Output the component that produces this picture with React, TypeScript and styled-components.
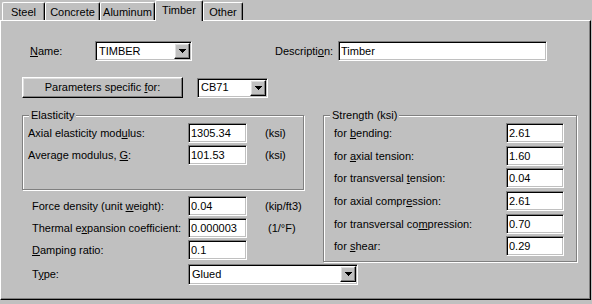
import React from 'react';
import styled, { createGlobalStyle, css } from 'styled-components';

const Global = createGlobalStyle`
  html, body { margin: 0; padding: 0; background: #c0c0c0; }
  body { font-family: "Liberation Sans", Arial, sans-serif; font-size: 11px; color: #000; }
  * { box-sizing: border-box; }
`;

const Window = styled.div`
  width: 592px;
  height: 304px;
  background: #c0c0c0;
  overflow: hidden;
`;

const TabStrip = styled.div`
  display: flex;
  align-items: flex-end;
  height: 20px;
  padding-left: 2px;
  position: relative;
  z-index: 1;
`;

const Tab = styled.div<{ $w: number; $active?: boolean }>`
  width: ${(p) => p.$w}px;
  height: ${(p) => (p.$active ? 21 : 18)}px;
  margin-bottom: ${(p) => (p.$active ? -1 : 0)}px;
  background: #c0c0c0;
  border-left: 1px solid #fff;
  border-top: 1px solid #fff;
  border-right: 1px solid #000;
  border-top-left-radius: 2px;
  border-top-right-radius: 2px;
  box-shadow: inset -1px 0 0 #808080;
  display: flex;
  justify-content: center;
  padding-top: ${(p) => (p.$active ? 3 : 3)}px;
  line-height: 13px;
`;

const Panel = styled.div`
  width: 591px;
  height: 280px;
  border-left: 1px solid #fff;
  border-top: 1px solid #fff;
  border-right: 1px solid #000;
  border-bottom: 1px solid #000;
  box-shadow: inset -1px -1px 0 #808080;
  padding: 20px 0 0 21px;
`;

const Row = styled.div<{ $mt?: number; $h?: number; $pl?: number }>`
  display: flex;
  align-items: center;
  height: ${(p) => p.$h ?? 20}px;
  margin-top: ${(p) => p.$mt ?? 0}px;
  padding-left: ${(p) => p.$pl ?? 0}px;
`;

const Label = styled.span<{ $w?: number; $pl?: number; $ml?: number }>`
  display: block;
  flex: none;
  width: ${(p) => (p.$w ? `${p.$w}px` : 'auto')};
  padding-left: ${(p) => p.$pl ?? 0}px;
  margin-left: ${(p) => p.$ml ?? 0}px;
  white-space: nowrap;
  line-height: 13px;
`;

const Key = styled.span`
  text-decoration: underline;
  text-underline-offset: 1px;
`;

const sunken = css`
  background: #fff;
  border: 1px solid;
  border-color: #808080 #fff #fff #808080;
  box-shadow: inset 1px 1px 0 #000, inset -1px -1px 0 #c0c0c0;
`;

const raised = css`
  background: #c0c0c0;
  border: 1px solid;
  border-color: #fff #000 #000 #fff;
  box-shadow: inset -1px -1px 0 #808080, inset 1px 1px 0 #dfdfdf;
`;

const Field = styled.input<{ $w: number; $h?: number }>`
  ${sunken};
  flex: none;
  width: ${(p) => p.$w}px;
  height: ${(p) => p.$h ?? 20}px;
  padding: 0 0 0 2px;
  margin: 0;
  font: inherit;
  color: #000;
  outline: none;
`;

const Combo = styled.div<{ $w: number; $h?: number; $ml?: number }>`
  ${sunken};
  flex: none;
  display: flex;
  align-items: center;
  width: ${(p) => p.$w}px;
  height: ${(p) => p.$h ?? 20}px;
  margin-left: ${(p) => p.$ml ?? 0}px;
  padding: 1px;
`;

const ComboText = styled.span`
  flex: 1;
  padding-left: 2px;
  line-height: 13px;
`;

const DropButton = styled.div`
  ${raised};
  flex: none;
  width: 16px;
  height: 16px;
  display: flex;
  align-items: center;
  justify-content: center;
  align-self: flex-start;
`;

const PushButton = styled.div<{ $w: number }>`
  ${raised};
  flex: none;
  width: ${(p) => p.$w}px;
  height: 21px;
  display: flex;
  align-items: center;
  justify-content: center;
  line-height: 13px;
`;

const Unit = styled.span<{ $ml: number }>`
  margin-left: ${(p) => p.$ml}px;
  white-space: nowrap;
  line-height: 13px;
`;

const Columns = styled.div`
  display: flex;
  align-items: flex-start;
  margin-top: 11px;
`;

const LeftCol = styled.div`
  width: 282px;
  display: flex;
  flex-direction: column;
`;

const RightCol = styled.div`
  width: 254px;
  margin-left: 19px;
`;

const Group = styled.fieldset<{ $w: number; $h: number }>`
  width: ${(p) => p.$w}px;
  height: ${(p) => p.$h}px;
  margin: 0;
  padding: 1px 0 0 0;
  min-inline-size: 0;
  border: 1px solid #808080;
  box-shadow: inset 1px 1px 0 #fff, 1px 1px 0 #fff;
`;

const Legend = styled.legend`
  margin-left: 6px;
  padding: 0 2px;
  line-height: 13px;
  background: #c0c0c0;
`;

const Arrow = () => (
  <svg width="7" height="4" viewBox="0 0 7 4" style={{ display: 'block' }}>
    <path d="M0 0h7L3.5 4z" fill="#000" shapeRendering="crispEdges" />
  </svg>
);

const ComboBox: React.FC<{ w: number; h?: number; ml?: number; value: string }> = ({ w, h, ml, value }) => (
  <Combo $w={w} $h={h} $ml={ml}>
    <ComboText>{value}</ComboText>
    <DropButton>
      <Arrow />
    </DropButton>
  </Combo>
);

const strength: { label: React.ReactNode; value: string; mt: number }[] = [
  { label: <>for <Key>b</Key>ending:</>, value: '2.61', mt: 0 },
  { label: <>for <Key>a</Key>xial tension:</>, value: '1.60', mt: 3 },
  { label: <>for transversal <Key>t</Key>ension:</>, value: '0.04', mt: 2 },
  { label: <>for axial compr<Key>e</Key>ssion:</>, value: '2.61', mt: 3 },
  { label: <>for transversal co<Key>m</Key>pression:</>, value: '0.70', mt: 3 },
  { label: <>for <Key>s</Key>hear:</>, value: '0.29', mt: 2 },
];

export default function App() {
  return (
    <Window>
      <Global />
      <TabStrip>
        <Tab $w={43}>Steel</Tab>
        <Tab $w={55}>Concrete</Tab>
        <Tab $w={55}>Aluminum</Tab>
        <Tab $w={48} $active>Timber</Tab>
        <Tab $w={40}>Other</Tab>
      </TabStrip>
      <Panel>
        <Row>
          <Label $w={73} $pl={8}><Key>N</Key>ame:</Label>
          <ComboBox w={97} value="TIMBER" />
          <Label $w={63} $ml={83}>Descripti<Key>o</Key>n:</Label>
          <Field $w={209} defaultValue="Timber" readOnly />
        </Row>
        <Row $mt={16} $h={21}>
          <PushButton $w={161}>Parameters specific&nbsp;<Key>f</Key>or:</PushButton>
          <ComboBox w={71} ml={14} value="CB71" />
        </Row>
        <Columns>
          <LeftCol>
            <Group $w={282} $h={81}>
              <Legend>Elasticity</Legend>
              <Row $pl={5}>
                <Label $w={160}>Axial elasticity mod<Key>u</Key>lus:</Label>
                <Field $w={59} defaultValue="1305.34" readOnly />
                <Unit $ml={18}>(ksi)</Unit>
              </Row>
              <Row $pl={5} $mt={2}>
                <Label $w={160}>Average modulus, <Key>G</Key>:</Label>
                <Field $w={59} defaultValue="101.53" readOnly />
                <Unit $ml={18}>(ksi)</Unit>
              </Row>
            </Group>
            <Row $pl={10} $mt={6}>
              <Label $w={156}>Force density (unit <Key>w</Key>eight):</Label>
              <Field $w={59} defaultValue="0.04" readOnly />
              <Unit $ml={18}>(kip/ft3)</Unit>
            </Row>
            <Row $pl={10} $mt={2}>
              <Label $w={156}>Thermal e<Key>x</Key>pansion coefficient:</Label>
              <Field $w={59} defaultValue="0.000003" readOnly />
              <Unit $ml={21}>(1/°F)</Unit>
            </Row>
            <Row $pl={10} $mt={2}>
              <Label $w={156}><Key>D</Key>amping ratio:</Label>
              <Field $w={59} defaultValue="0.1" readOnly />
            </Row>
            <Row $pl={10} $mt={4} $h={21}>
              <Label $w={156}>T<Key>y</Key>pe:</Label>
              <ComboBox w={170} h={21} value="Glued" />
            </Row>
          </LeftCol>
          <RightCol>
            <Group $w={254} $h={153}>
              <Legend>Strength (ksi)</Legend>
              {strength.map((s, i) => (
                <Row key={i} $pl={10} $mt={s.mt}>
                  <Label $w={172}>{s.label}</Label>
                  <Field $w={58} defaultValue={s.value} readOnly />
                </Row>
              ))}
            </Group>
          </RightCol>
        </Columns>
      </Panel>
    </Window>
  );
}
